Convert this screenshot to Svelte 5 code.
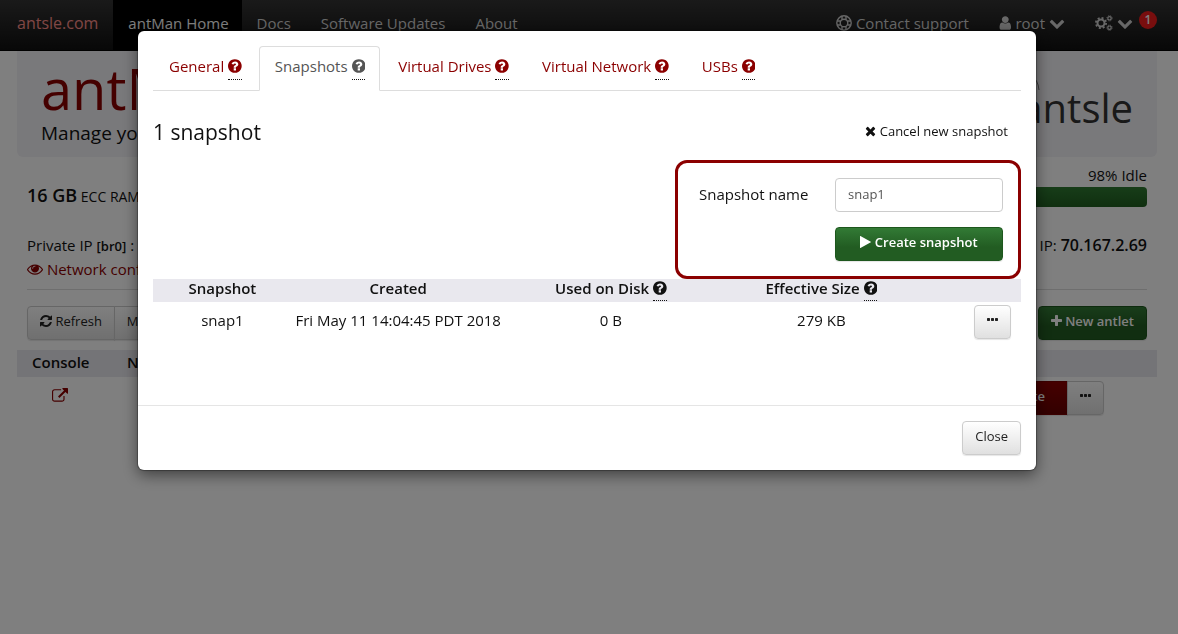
<script>
    // x offset and width of the glyph on a 1792 unit high canvas, then its path
    const icons = {
        question: [128, 1536, "M1024 1376v-192q0-14-9-23t-23-9h-192q-14 0-23 9t-9 23v192q0 14 9 23t23 9h192q14 0 23-9t9-23zm256-672q0-88-55.5-163t-138.5-116-170-41q-243 0-371 213-15 24 8 42l132 100q7 6 19 6 16 0 25-12 53-68 86-92 34-24 86-24 48 0 85.5 26t37.5 59q0 38-20 61t-68 45q-63 28-115.5 86.5t-52.5 125.5v36q0 14 9 23t23 9h192q14 0 23-9t9-23q0-19 21.5-49.5t54.5-49.5q32-18 49-28.5t46-35 44.5-48 28-60.5 12.5-81zm384 192q0 209-103 385.5t-279.5 279.5-385.5 103-385.5-103-279.5-279.5-103-385.5 103-385.5 279.5-279.5 385.5-103 385.5 103 279.5 279.5 103 385.5z"],
        chevron: [0, 1792, "M1683 808l-742 741q-19 19-45 19t-45-19l-742-741q-19-19-19-45.5t19-45.5l166-165q19-19 45-19t45 19l531 531 531-531q19-19 45-19t45 19l166 165q19 19 19 45.5t-19 45.5z"],
        user: [192, 1408, "M1536 1399q0 109-62.5 187t-150.5 78h-854q-88 0-150.5-78t-62.5-187q0-85 8.5-160.5t31.5-152 58.5-131 94-89 134.5-34.5q131 128 313 128t313-128q76 0 134.5 34.5t94 89 58.5 131 31.5 152 8.5 160.5zm-256-887q0 159-112.5 271.5t-271.5 112.5-271.5-112.5-112.5-271.5 112.5-271.5 271.5-112.5 271.5 112.5 112.5 271.5z"],
        play: [192, 1408, "M1576 927l-1328 738q-23 13-39.5 3t-16.5-36v-1472q0-26 16.5-36t39.5 3l1328 738q23 13 23 31t-23 31z"],
        plus: [192, 1408, "M1600 736v192q0 40-28 68t-68 28h-416v416q0 40-28 68t-68 28h-192q-40 0-68-28t-28-68v-416h-416q-40 0-68-28t-28-68v-192q0-40 28-68t68-28h416v-416q0-40 28-68t68-28h192q40 0 68 28t28 68v416h416q40 0 68 28t28 68z"],
        times: [192, 1408, "M1490 1322q0 40-28 68l-136 136q-28 28-68 28t-68-28l-294-294-294 294q-28 28-68 28t-68-28l-136-136q-28-28-28-68t28-68l294-294-294-294q-28-28-28-68t28-68l136-136q28-28 68-28t68 28l294 294 294-294q28-28 68-28t68 28l136 136q28 28 28 68t-28 68l-294 294 294 294q28 28 28 68z"],
        dots: [192, 1408, "M576 736v192q0 40-28 68t-68 28h-192q-40 0-68-28t-28-68v-192q0-40 28-68t68-28h192q40 0 68 28t28 68zm512 0v192q0 40-28 68t-68 28h-192q-40 0-68-28t-28-68v-192q0-40 28-68t68-28h192q40 0 68 28t28 68zm512 0v192q0 40-28 68t-68 28h-192q-40 0-68-28t-28-68v-192q0-40 28-68t68-28h192q40 0 68 28t28 68z"],
        eye: [0, 1792, "M1664 960q-152-236-381-353 61 104 61 225 0 185-131.5 316.5t-316.5 131.5-316.5-131.5-131.5-316.5q0-121 61-225-229 117-381 353 133 205 333.5 326.5t434.5 121.5 434.5-121.5 333.5-326.5zm-720-384q0-20-14-34t-34-14q-125 0-214.5 89.5t-89.5 214.5q0 20 14 34t34 14 34-14 14-34q0-86 61-147t147-61q20 0 34-14t14-34zm848 384q0 34-20 69-140 230-376.5 368.5t-499.5 138.5-499.5-139-376.5-368q-20-35-20-69t20-69q140-229 376.5-368t499.5-139 499.5 139 376.5 368q20 35 20 69z"],
        refresh: [128, 1536, "M1639 1056q0 5-1 7-64 268-268 434.5t-478 166.5q-146 0-282.5-55t-243.5-157l-129 129q-19 19-45 19t-45-19-19-45v-448q0-26 19-45t45-19h448q26 0 45 19t19 45-19 45l-137 137q71 66 161 102t187 36q134 0 250-65t186-179q11-17 53-117 8-23 30-23h192q13 0 22.5 9.5t9.5 22.5zm25-800v448q0 26-19 45t-45 19h-448q-26 0-45-19t-19-45 19-45l138-138q-148-137-349-137-134 0-250 65t-186 179q-11 17-53 117-8 23-30 23h-199q-13 0-22.5-9.5t-9.5-22.5v-7q65-268 270-434.5t480-166.5q146 0 284 55.5t245 156.5l130-129q19-19 45-19t45 19 19 45z"],
        external: [0, 1792, "M1408 928v320q0 119-84.5 203.5t-203.5 84.5h-832q-119 0-203.5-84.5t-84.5-203.5v-832q0-119 84.5-203.5t203.5-84.5h704q14 0 23 9t9 23v64q0 14-9 23t-23 9h-704q-66 0-113 47t-47 113v832q0 66 47 113t113 47h832q66 0 113-47t47-113v-320q0-14 9-23t23-9h64q14 0 23 9t9 23zm384-864v512q0 26-19 45t-45 19-45-19l-176-176-652 652q-10 10-23 10t-23-10l-114-114q-10-10-10-23t10-23l652-652-176-176q-19-19-19-45t19-45 45-19h512q26 0 45 19t19 45z"]
    }

    const tabs = ["General", "Snapshots", "Virtual Drives", "Virtual Network", "USBs"]
    let activeTab = $state("Snapshots")
    let snapshotName = $state("snap1")

    const snapshots = [
        {name: "snap1", created: "Fri May 11 14:04:45 PDT 2018", used: "0 B", size: "279 KB"}
    ]
</script>

{#snippet icon(name)}
    {@const [x, width, path] = icons[name]}
    <svg class="icon" viewBox="{x} 0 {width} 1792" aria-hidden="true"><path d={path}/></svg>
{/snippet}

{#snippet help()}
    <span class="help">{@render icon("question")}</span>
{/snippet}

<nav class="navbar">
    <a class="brand" href="#antsle">antsle.com</a>
    <a class="current" href="#home">antMan Home</a>
    <a href="#docs">Docs</a>
    <a href="#updates">Software Updates</a>
    <a href="#about">About</a>
    <div class="nav-right">
        <a href="#support">
            <svg class="ring" viewBox="0 0 16 16" aria-hidden="true">
                <circle cx="8" cy="8" r="7.2"/>
                <circle cx="8" cy="8" r="3.8"/>
                <path d="M6 1v3.5M10 1v3.5M6 11.5V15M10 11.5V15M1 6h3.5M1 10h3.5M11.5 6H15M11.5 10H15"/>
            </svg>
            Contact support
        </a>
        <a href="#user">{@render icon("user")} root {@render icon("chevron")}</a>
        <a class="settings" href="#settings" aria-label="Settings">
            <svg class="cogs" viewBox="0 0 18 16" aria-hidden="true">
                <circle cx="6" cy="8" r="3.5" stroke-width="2"/>
                <circle cx="6" cy="8" r="5.1" stroke-width="1.8" stroke-dasharray="2 2"/>
                <circle cx="14.5" cy="3.3" r="1.7" stroke-width="1.2"/>
                <circle cx="14.5" cy="3.3" r="2.6" stroke-width="1" stroke-dasharray="1.02 1.02"/>
                <circle cx="14.5" cy="12.7" r="1.7" stroke-width="1.2"/>
                <circle cx="14.5" cy="12.7" r="2.6" stroke-width="1" stroke-dasharray="1.02 1.02"/>
            </svg>
            {@render icon("chevron")}
            <span class="badge">1</span>
        </a>
    </div>
</nav>

<main class="page">
    <header class="hero">
        <div>
            <h1>antMan</h1>
            <p>Manage your antlets</p>
        </div>
        <div class="logo">
            <svg class="antenna" viewBox="0 0 12 16" aria-hidden="true"><path d="M1 1Q8 4 9 15"/></svg>
            antsle
        </div>
    </header>

    <section class="stats">
        <div class="memory"><strong>16 GB</strong> ECC RAM</div>
        <div class="cpu">
            <span>98% Idle</span>
            <div class="meter"></div>
        </div>
    </section>

    <section class="network">
        <div>
            <div>Private IP <b>[br0]</b> : <strong>10.1.1.1</strong></div>
            <a href="#network">{@render icon("eye")} Network configuration</a>
        </div>
        <div>IP: <strong>70.167.2.69</strong></div>
    </section>

    <div class="toolbar">
        <div class="group">
            <button class="btn">{@render icon("refresh")} Refresh</button>
            <button class="btn">Manage</button>
        </div>
        <button class="btn green">{@render icon("plus")} New antlet</button>
    </div>

    <table class="antlets">
        <thead>
            <tr><th>Console</th><th>Name</th><th></th></tr>
        </thead>
        <tbody>
            <tr>
                <td><a href="#console" aria-label="Open console">{@render icon("external")}</a></td>
                <td></td>
                <td>
                    <div class="group">
                        <button class="btn red">Delete</button>
                        <button class="btn" aria-label="More">{@render icon("dots")}</button>
                    </div>
                </td>
            </tr>
        </tbody>
    </table>
</main>

<div class="backdrop">
    <div class="modal" role="dialog" aria-modal="true" aria-label="Antlet settings">
        <div class="modal-body">
            <div class="tabs" role="tablist">
                {#each tabs as tab}
                    <button role="tab" class="tab" class:active={tab === activeTab} aria-selected={tab === activeTab}
                            onclick={() => activeTab = tab}>
                        {tab} {@render help()}
                    </button>
                {/each}
            </div>

            <div class="title">
                <h3>1 snapshot</h3>
                <button class="cancel">{@render icon("times")} Cancel new snapshot</button>
            </div>

            <form class="create" onsubmit={(e) => e.preventDefault()}>
                <label for="snapshot-name">Snapshot name</label>
                <input id="snapshot-name" type="text" bind:value={snapshotName}/>
                <button class="btn green">{@render icon("play")} Create snapshot</button>
            </form>

            <table class="snapshots">
                <thead>
                    <tr>
                        <th>Snapshot</th>
                        <th>Created</th>
                        <th>Used on Disk {@render help()}</th>
                        <th>Effective Size {@render help()}</th>
                        <th></th>
                    </tr>
                </thead>
                <tbody>
                    {#each snapshots as snapshot}
                        <tr>
                            <td>{snapshot.name}</td>
                            <td>{snapshot.created}</td>
                            <td>{snapshot.used}</td>
                            <td>{snapshot.size}</td>
                            <td><button class="btn" aria-label="More">{@render icon("dots")}</button></td>
                        </tr>
                    {/each}
                </tbody>
            </table>
        </div>
        <div class="modal-footer">
            <button class="btn">Close</button>
        </div>
    </div>
</div>

<style>
    :global(body) {
        margin: 0;
        padding-right: 4px;
        background: #fff;
        color: #111;
        font: 15px/24px "Open Sans", "Noto Sans", sans-serif;
    }

    button, input {
        font: inherit;
        color: inherit;
    }

    a {
        color: #8b0000;
        text-decoration: none;
    }

    h1, h3, p {
        margin: 0;
        font-weight: 400;
    }

    strong, b {
        font-weight: 600;
        line-height: 20px;
    }

    .icon {
        width: auto;
        height: 16px;
        fill: currentColor;
        vertical-align: -2px;
    }

    .navbar {
        display: flex;
        height: 50px;
        margin-right: -4px;
        padding-right: 21px;
        border-bottom: 1px solid #000;
        background: linear-gradient(#343434, #101010);
    }

    .navbar a {
        display: flex;
        align-items: center;
        padding: 0 15px 4px;
        color: #d0d0d0;
    }

    .navbar .brand {
        padding-left: 17px;
        color: #ff8e8a;
        font-size: 16px;
    }

    .navbar .current {
        padding-right: 13px;
        background: #000;
        color: #fff;
    }

    .nav-right {
        display: flex;
        margin-left: auto;
    }

    .nav-right a {
        gap: 4px;
    }

    .nav-right .settings {
        padding-right: 0;
    }

    .ring, .cogs {
        width: 16px;
        height: 16px;
        fill: none;
        stroke: currentColor;
    }

    .ring {
        stroke-width: 1.4;
    }

    .cogs {
        width: 18px;
    }

    .badge {
        width: 18px;
        margin: 0 0 6px 2px;
        border-radius: 9px;
        background: #f01c1c;
        color: #fff;
        font-size: 12px;
        font-weight: 600;
        line-height: 18px;
        text-align: center;
    }

    .page {
        padding: 0 17px;
    }

    .hero {
        display: flex;
        justify-content: space-between;
        height: 106px;
        box-sizing: border-box;
        padding: 8px 24px;
        border-radius: 0 0 6px 6px;
        background: #f3f2f6;
    }

    .hero h1 {
        color: #8b0000;
        font-size: 56px;
        line-height: 58px;
    }

    .hero p {
        font-size: 19px;
        line-height: 32px;
    }

    .logo {
        position: relative;
        color: #333;
        font-size: 40px;
        line-height: 98px;
    }

    .antenna {
        position: absolute;
        top: 16px;
        left: 10px;
        width: 12px;
        height: 16px;
        fill: none;
        stroke: #777;
    }

    .stats, .network, .toolbar {
        display: flex;
        justify-content: space-between;
        margin: 0 10px;
    }

    .stats {
        padding-top: 6px;
    }

    .memory {
        padding-top: 22px;
        font-size: 14px;
    }

    .stats strong {
        font-size: 18px;
    }

    .cpu {
        width: 50%;
        text-align: right;
    }

    .meter {
        height: 20px;
        border-radius: 4px;
        background: linear-gradient(#2f7a32, #205f20);
    }

    .network {
        padding: 24px 0 8px;
        border-bottom: 1px solid #ddd;
    }

    .network strong {
        font-size: 16px;
    }

    .network b {
        font-size: 13px;
    }

    .toolbar {
        padding: 16px 0 10px;
    }

    .group {
        display: flex;
    }

    .group .btn:first-child {
        border-radius: 4px 0 0 4px;
    }

    .group .btn:last-child {
        margin-left: -1px;
        border-radius: 0 4px 4px 0;
    }

    .btn {
        height: 34px;
        padding: 0 12px 4px;
        border: 1px solid #ccc;
        border-radius: 4px;
        background: linear-gradient(#fff, #e0e0e0);
        box-shadow: 0 1px 1px rgba(0, 0, 0, 0.1);
        color: #222;
        font-size: 13px;
        line-height: 20px;
    }

    .btn .icon, .cancel .icon {
        height: 14px;
    }

    .green {
        border-color: #1d571d;
        background: linear-gradient(#327a35, #225c22 60%);
        color: #fff;
        font-weight: 600;
    }

    .red {
        padding: 0 22px 4px;
        border-color: #700;
        background: linear-gradient(#8b0000, #600);
        color: #fff;
        font-weight: 600;
    }

    table {
        width: 100%;
        border-collapse: collapse;
        table-layout: fixed;
    }

    th {
        padding: 0;
        background: #e9e8ee;
        font-weight: 600;
    }

    td {
        padding: 3px 0;
        text-align: center;
        vertical-align: top;
    }

    .antlets th {
        padding-bottom: 3px;
        text-align: left;
    }

    .antlets th:first-child {
        width: 95px;
        padding-left: 15px;
    }

    .antlets td {
        padding-top: 4px;
    }

    .antlets td:first-child {
        padding: 7px 25px 0 0;
    }

    .antlets td:last-child {
        padding-right: 53px;
    }

    .antlets .group {
        justify-content: flex-end;
    }

    .backdrop {
        position: fixed;
        inset: 0;
        padding: 31px 4px 0 0;
        background: rgba(0, 0, 0, 0.5);
    }

    .modal {
        max-width: 898px;
        margin: 0 auto;
        border-radius: 6px;
        background: #fff;
        box-shadow: 0 5px 15px rgba(0, 0, 0, 0.5), 0 0 1px 1px rgba(0, 0, 0, 0.3);
    }

    .modal-body {
        padding: 15px 15px 63px;
    }

    .tabs {
        display: flex;
        gap: 2px;
        border-bottom: 1px solid #ddd;
    }

    .tab {
        height: 45px;
        margin-bottom: -1px;
        padding: 0 14px 3px 15px;
        border: 1px solid transparent;
        border-radius: 4px 4px 0 0;
        background: none;
        color: #8b0000;
    }

    .tab.active {
        border-color: #ddd #ddd #fff;
        background: #fff;
        color: #555;
    }

    .help {
        display: inline-block;
        padding-bottom: 1px;
        border-bottom: 1px dotted #111;
    }

    .title {
        display: flex;
        align-items: center;
        justify-content: space-between;
        padding: 25px 13px 12px 0;
    }

    .title h3 {
        font-size: 21px;
        line-height: 32px;
    }

    .cancel {
        padding: 0 0 2px;
        border: 0;
        background: none;
        font-size: 13px;
    }

    .create {
        display: grid;
        grid-template-columns: 1fr 168px;
        gap: 15px;
        width: 346px;
        box-sizing: border-box;
        margin-left: auto;
        padding: 15px 15px 15px 21px;
        border: 3px solid #8b0000;
        border-radius: 12px;
    }

    .create label {
        line-height: 32px;
    }

    .create input {
        height: 34px;
        box-sizing: border-box;
        min-width: 0;
        padding: 0 12px 2px;
        border: 1px solid #ccc;
        border-radius: 4px;
        color: #555;
        font-size: 13px;
    }

    .create .btn {
        grid-column: 2;
    }

    .snapshots th {
        height: 23px;
        line-height: 18px;
        vertical-align: top;
    }

    .snapshots .help {
        padding-bottom: 3px;
    }

    .snapshots td {
        line-height: 30px;
        white-space: nowrap;
    }

    .snapshots th:nth-child(1) {
        width: 16%;
    }

    .snapshots th:nth-child(4) {
        width: 24%;
    }

    .snapshots th:nth-child(5) {
        width: 11%;
    }

    .snapshots td:last-child {
        padding-right: 10px;
    }

    .snapshots .btn {
        display: block;
        margin-left: auto;
    }

    .modal-footer {
        padding: 15px;
        border-top: 1px solid #e5e5e5;
    }

    .modal-footer .btn {
        display: block;
        margin-left: auto;
    }
</style>
